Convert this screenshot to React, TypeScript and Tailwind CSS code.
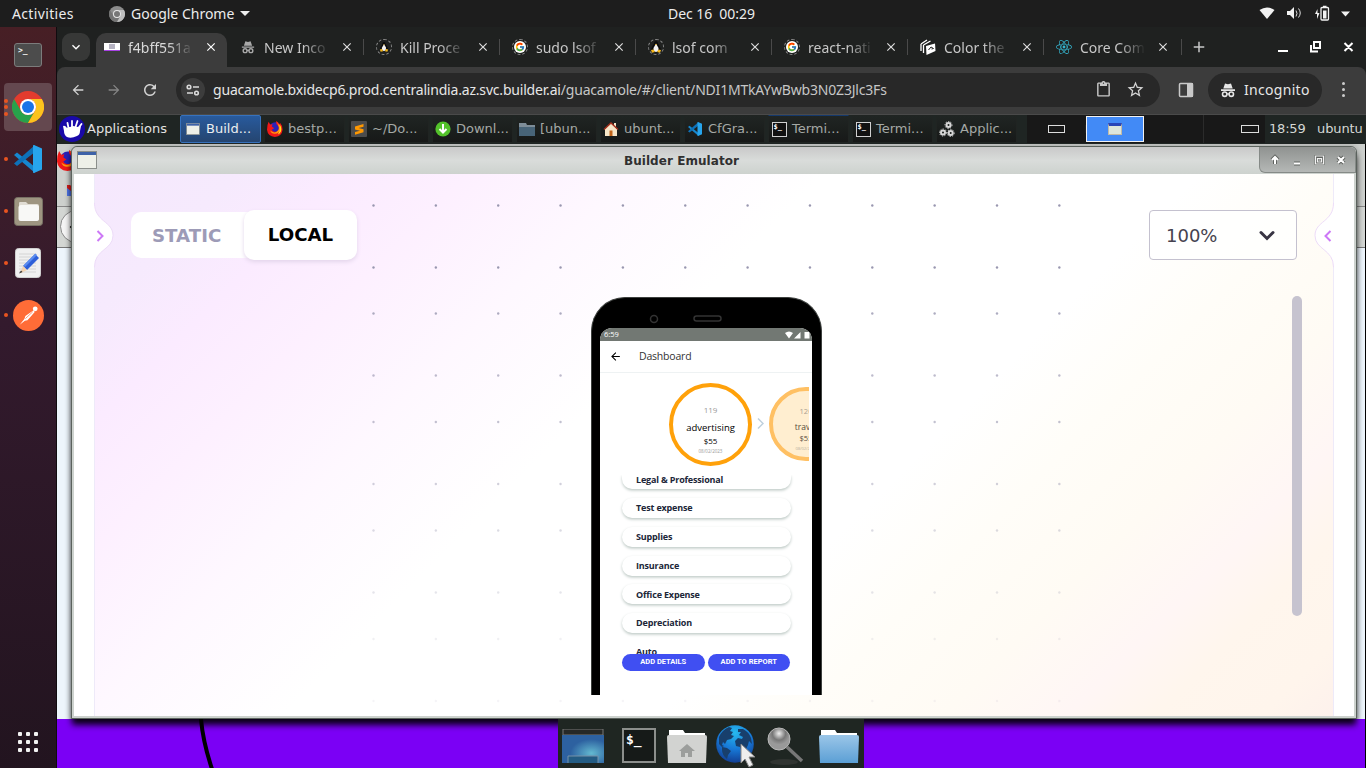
import type { ReactNode } from "react";
import { FcGoogle } from "react-icons/fc";
import { FaReact } from "react-icons/fa";
import { MdArrowBack, MdArrowForward, MdRefresh, MdClose, MdAdd, MdStarBorder, MdContentPaste, MdKeyboardArrowDown } from "react-icons/md";

const Chrome = ({ gray = false, className = "" }: { gray?: boolean; className?: string }) => {
  const c = gray ? ["#8c8c8c", "#747474", "#bdbdbd"] : ["#e33b2e", "#27a24b", "#fcc31e"];
  return (
    <svg viewBox="0 0 48 48" className={className}>
      <circle cx="24" cy="24" r="24" fill={c[0]} />
      <path d="M3.2 12A24 24 0 0 0 24 48L34.4 30A12 12 0 0 1 13.6 30Z" fill={c[1]} />
      <path d="M24 12H44.8A24 24 0 0 1 24 48L34.4 30A12 12 0 0 0 24 12Z" fill={c[2]} />
      <circle cx="24" cy="24" r="12" fill={gray ? "#e8e8e8" : "#fff"} />
      <circle cx="24" cy="24" r="9" fill={gray ? "#777" : "#1a73e8"} />
    </svg>
  );
};

const Incognito = ({ className = "" }: { className?: string }) => (
  <svg viewBox="0 0 16 16" className={className} fill="currentColor">
    <path d="M5 1.500 8 2.300l3-.8 1.700 5H3.300ZM1 7.300h14v1.600H1z" />
    <circle cx="4.700" cy="12.200" r="2.200" fill="none" stroke="currentColor" strokeWidth="1.600" />
    <circle cx="11.300" cy="12.200" r="2.200" fill="none" stroke="currentColor" strokeWidth="1.600" />
    <path d="M6.500 11.300h3v1.300h-3z" />
  </svg>
);

const Firefox = ({ className = "" }: { className?: string }) => (
  <svg viewBox="0 0 20 20" className={className}>
    <circle cx="10.500" cy="9.500" r="8" fill="#2a22b8" />
    <path d="M2 1 4 4.500 7 4 6 7l3 2-3 2q2 3.500 6 2 4-2 2.500-6L12 4q-1-2-.5-4 3 2 4 4l1-1.500q3.500 4 3 8.500-1 8.500-9.500 9Q1 19.500 0 11 0 5 2 1Z" fill="#f01818" />
    <path d="M12.500 1q1 3 4 5l.5 4q-1.500 6-7.500 6-4 0-5.500-4 4 3.500 8 1.500Q16 11 14.500 7Z" fill="#ff9a10" />
    <path d="M15.500 4q3.500 4 2 9-1.500 3-4 4 4-6 2-13Z" fill="#ffe21a" />
  </svg>
);

const Tux = ({ className = "" }: { className?: string }) => (
  <svg viewBox="0 0 12 12" className={className}>
    <path d="M6 0q2 0 2 2.500l2.500 4.500q1 3-2 4.500h-5Q.5 10 1.500 7L4 2.500Q4 0 6 0Z" fill="#0b0b0b" />
    <path d="M6 2.500 8.500 7q.5 3-2.500 4-3-1-2.500-4Z" fill="#f3f3f3" />
    <path d="M5 3h2L6 4.300ZM1 9l2.500-.5L5 11l-3 .7ZM11 9l-2.500-.5L7 11l3 .7Z" fill="#f4b71b" />
  </svg>
);

const VsCode = ({ className = "" }: { className?: string }) => (
  <svg viewBox="0 0 28 28" className={className}>
    <path d="M0 10 3 7.5 21 22v6L0 10Z" fill="#1687cf" />
    <path d="M0 18.5 3 21 21 7V0L0 18.5Z" fill="#0d71b8" />
    <path d="M20 0 28 3.5v21L20 28c-.8 0-1-.5-1-1V1c0-.6.3-1 1-1Z" fill="#27a5ed" />
  </svg>
);

const WindowIcon = ({ className = "" }: { className?: string }) => (
  <svg viewBox="0 0 20 18" className={className}>
    <rect x=".5" y=".5" width="19" height="17" fill="#eef0e8" stroke="#8b8f8b" />
    <rect x="1" y="1" width="18" height="3" fill="#3e62a8" />
  </svg>
);

const Globe = ({ className = "" }: { className?: string }) => (
  <svg viewBox="0 0 38 38" className={className}>
    <defs>
      <radialGradient id="globe" cx=".5" cy=".2" r=".8">
        <stop offset="0" stopColor="#27b9ee" />
        <stop offset=".55" stopColor="#1778d6" />
        <stop offset="1" stopColor="#123f94" />
      </radialGradient>
    </defs>
    <circle cx="19" cy="19" r="18.8" fill="url(#globe)" />
    <path d="M3 12Q6 5 13 2l3 1-2 3 3 1-2 3 3 1-3 3-4 1-2 4-2-2-1 3 2 1-2 1-3-3ZM6 22l5 1 4 3-3 4-1 4q-5-4-5-9ZM22 4l5 0q6 3 8 9l1 6-3-3-1 4-3 6-3 2-2-6-4-1-1-5 3-3 4 1 1-2-4-2 2-3-3 0Z" fill="#183f6c" />
  </svg>
);

function Ring({ children }: { children: ReactNode }) {
  return <span className="flex size-4 items-center justify-center rounded-full border border-dashed border-[#8a8a8a]">{children}</span>;
}

const tabs: { title: string; icon: ReactNode }[] = [
  { title: "New Inco", icon: <Incognito className="size-[14px] text-[#a9a9a9]" /> },
  { title: "Kill Proce", icon: <Ring><Tux className="size-2.5" /></Ring> },
  { title: "sudo lsof", icon: <Ring><span className="flex size-3 items-center justify-center rounded-full bg-white"><FcGoogle className="size-[10px]" /></span></Ring> },
  { title: "lsof com", icon: <Ring><Tux className="size-3" /></Ring> },
  { title: "react-nati", icon: <Ring><span className="flex size-3 items-center justify-center rounded-full bg-white"><FcGoogle className="size-[10px]" /></span></Ring> },
  {
    title: "Color the",
    icon: (
      <svg viewBox="0 0 16 16" className="size-4">
        <path d="M1 5v7M1 5l6-4M3.5 6v8M3.5 6l7-4" stroke="#fff" strokeWidth="1.3" fill="none" />
        <path d="M6 7 15 4.5 15.5 12 6.5 16Z" fill="#fff" />
        <path d="M8.5 11 11 8l2.5 1.5-2 .5" stroke="#222" fill="none" />
      </svg>
    ),
  },
  { title: "Core Com", icon: <FaReact className="size-4 text-[#35b5cf]" /> },
];

const termIcon = (
  <span className="flex size-[15px] border border-[#d0d0d0] bg-[#111] pl-[1px] font-['DejaVu_Sans_Mono',monospace] text-[7px] leading-[9px] font-bold text-white">$_</span>
);

const tasks: { title: string; icon: ReactNode }[] = [
  { title: "Build...", icon: <WindowIcon className="h-3 w-3.5" /> },
  { title: "bestp...", icon: <Firefox className="size-4" /> },
  {
    title: "~/Do...",
    icon: (
      <svg viewBox="0 0 16 16" className="size-4">
        <rect width="16" height="16" rx="1" fill="#4c4c4c" />
        <path d="M12.5 3 4 5.5v3l5 1.3-5 1.3v2.7l8.5-2.5v-3L7.500 7l5-1.300Z" fill="#ff9800" />
      </svg>
    ),
  },
  {
    title: "Downl...",
    icon: (
      <svg viewBox="0 0 16 16" className="size-4">
        <circle cx="8" cy="8" r="7.600" fill="#53c22b" />
        <path d="M8 3v8M4.500 8 8 11.500 11.500 8" stroke="#fff" strokeWidth="2" fill="none" />
      </svg>
    ),
  },
  {
    title: "[ubun...",
    icon: (
      <svg viewBox="0 0 16 14" className="h-3.5 w-4">
        <path d="M0 1h7l1 2h8v11H0Z" fill="#7e8d98" />
        <path d="M0 5h16v9H0Z" fill="#486478" />
      </svg>
    ),
  },
  {
    title: "ubunt...",
    icon: (
      <svg viewBox="0 0 16 16" className="size-4">
        <path d="M11 2h2v4h-2zM2 8l6-6 6 6v7H2Z" fill="#f7e6c8" />
        <path d="M1 8.500 8 2l7 6.500" stroke="#a5301c" strokeWidth="1.400" fill="none" />
        <path d="M6.500 9.500h3V15h-3z" fill="#c2651b" />
      </svg>
    ),
  },
  { title: "CfGra...", icon: <VsCode className="size-3.5" /> },
  { title: "Termi...", icon: termIcon },
  { title: "Termi...", icon: termIcon },
  {
    title: "Applic...",
    icon: (
      <svg viewBox="0 0 16 16" className="size-4" fill="none" stroke="#d8d8d8">
        <g strokeWidth="2"><circle cx="9.500" cy="4" r="2" /><circle cx="4" cy="11.500" r="2" /><circle cx="11.700" cy="12" r="2" /></g>
        <g strokeWidth="1" strokeDasharray="1.300 1.300"><circle cx="9.500" cy="4" r="3.500" /><circle cx="4" cy="11.500" r="3.500" /><circle cx="11.700" cy="12" r="3.500" /></g>
      </svg>
    ),
  },
];

const GnomeBar = () => (
  <header className="flex h-[27px] shrink-0 items-center bg-[#1d1d1d] text-[14px] text-[#ececec]">
    <span className="ml-3 w-[97px] tracking-[0.35px]">Activities</span>
    <Chrome gray className="size-4" />
    <span className="ml-1.5 w-[109px] whitespace-nowrap">Google Chrome</span>
    <svg viewBox="0 0 10 5" className="h-[5px] w-[10px]"><path d="M0 0h10L5 5Z" fill="#eee" /></svg>
    <span className="ml-[418px] w-[88px] whitespace-pre tracking-[-0.05px]">Dec 16  00:29</span>
    <svg viewBox="0 0 100 20" className="ml-[503px] h-5 w-[100px]" fill="#f2f2f2">
      <path d="M.5 6q7.500-5 15 0L8 15Z" />
      <path d="M28 7h3l4-4v12l-4-4h-3z" />
      <path d="M37 6.500q2 3 0 6M39.500 4.500q3.500 4.500 0 9" stroke="#ddd" fill="none" />
      <path d="M58.500 5 56 10h2v5l2.500-6h-2z" />
      <rect x="62" y="3.500" width="7.500" height="12.500" rx="1" fill="none" stroke="#f2f2f2" strokeWidth="1.300" />
      <path d="M64 6.500h3.500v8H64zM64 1.800h3.500V3.500H64zM82 7.500h9l-4.500 5Z" />
    </svg>
  </header>
);

const dots = (n: number) => (
  <div className="flex w-4 -translate-x-px flex-col items-center gap-[2.500px]">
    {Array.from({ length: n }, (_, i) => <span key={i} className="size-1 rounded-full bg-[#e95420]" />)}
  </div>
);

const DockItem = ({ n, active, children }: { n: number; active?: boolean; children: ReactNode }) => (
  <div className="relative flex h-[52px] w-[56px] items-center justify-center">
    <div className={active ? "flex size-12 items-center justify-center rounded bg-[#64484f]" : "flex size-12 items-center justify-center"}>{children}</div>
    <div className="absolute top-0 -left-[1px] flex h-full items-center">{dots(n)}</div>
  </div>
);

const Dock = () => (
  <aside className="flex w-[57px] shrink-0 flex-col border-r border-[#100b0f] bg-linear-to-b from-[#471f25] via-[#331a2d] via-40% to-[#22141f] pt-[2px]">
    <DockItem n={0}>
      <div className="h-6 w-7 rounded-[3px] border border-[#7c7c7c] bg-[#4c4c4c] pl-[3px] font-['DejaVu_Sans_Mono',monospace] text-[8px] leading-[13px] font-bold text-[#eee]">&gt;_</div>
    </DockItem>
    <DockItem n={3} active><Chrome className="size-8" /></DockItem>
    <DockItem n={1}><VsCode className="size-7" /></DockItem>
    <DockItem n={1}>
      <svg viewBox="0 0 29 29" className="size-[29px]">
        <rect x=".500" y=".500" width="28" height="28" rx="3" fill="#9e9581" stroke="#777064" />
        <path d="M5 6q0-1 1-1h6l2 2h9q2 0 2 2v12q0 3-3 3H8q-3 0-3-3Z" fill="#e1ddd4" />
        <rect x="4.500" y="8" width="20.500" height="16" rx="2.500" fill="#f8f8f6" />
      </svg>
    </DockItem>
    <DockItem n={1}>
      <svg viewBox="0 0 26 30" className="h-[30px] w-[26px]">
        <rect x=".500" y=".500" width="25" height="29" rx="3" fill="#f0f0f0" stroke="#d0d0d0" />
        <path d="M4 6h17M4 9h17M4 12h17M4 15h17M4 18h17M4 21h17M4 24h17" stroke="#d4d4d4" />
        <path d="M8 18 20 6l4 4-12 12Z" fill="#2e5fd8" />
        <path d="m8.500 17.500 12-12 1.500 1.500-12 12Z" fill="#5b8cf0" />
        <path d="M8 18l4 4-7 3.500Z" fill="#f2d2b0" /><path d="m6 22.500 1.500 1.500L4 25.500Z" fill="#333" />
      </svg>
    </DockItem>
    <DockItem n={1}>
      <svg viewBox="0 0 30 30" className="size-[31px]">
        <circle cx="15" cy="15" r="15" fill="#ff6c37" />
        <circle cx="21.500" cy="8.500" r="2.300" fill="#fff" />
        <path d="M20 10 12 15.500l-1 3-4.500 5.500 5-4 2.500-.500 7-8Z" fill="#fff" />
        <path d="m12 18 7-6.500" stroke="#ff6c37" strokeWidth=".7" />
      </svg>
    </DockItem>
    <div className="mt-auto mb-4 ml-[18px] grid w-5 grid-cols-3 gap-1">
      {Array.from({ length: 9 }, (_, i) => <span key={i} className="size-1 rounded-[1px] bg-[#f2f2f2]" />)}
    </div>
  </aside>
);

const fade = "w-[72px] shrink-0 whitespace-nowrap [mask-image:linear-gradient(to_right,black_55%,transparent_91%)]";

const TabStrip = () => (
  <div className="flex h-10 shrink-0 items-center bg-[#1f2120] text-[14px] text-[#c7c7c7]">
    <div className="ml-[5px] flex size-7 items-center justify-center rounded-[9px] bg-[#373837]"><MdKeyboardArrowDown className="size-4 text-white" /></div>
    <div className="ml-[6px] flex h-[34px] w-[131px] items-center self-end rounded-t-[10px] bg-[#3c3c3c] pb-[6px] pl-2 text-[#d9d9d9]">
      <span className="flex h-2 w-4 items-center justify-center border-b border-[#a742e4] bg-white"><span className="h-[5px] w-1.5 bg-[#b6b3c2]" /></span>
      <span className={`ml-2 ${fade}`}>f4bff551a</span>
      <MdClose className="ml-[4px] size-[14px] shrink-0 text-white" />
    </div>
    {tabs.map((t, i) => (
      <div key={t.title} className="flex h-full w-[136px] shrink-0 items-center">
        <span className={i ? "h-4 w-px bg-[#4a4a4a]" : "w-px"} />
        <span className="ml-[12px] flex w-4 justify-center">{t.icon}</span>
        <span className={`ml-2 ${fade}`}>{t.title}</span>
        <MdClose className="ml-[4px] size-[14px] shrink-0 text-[#dedede]" />
      </div>
    ))}
    <span className="ml-[2px] h-4 w-px bg-[#4a4a4a]" />
    <MdAdd className="ml-2 size-[18px]" />
    <svg viewBox="0 0 76 14" className="ml-[70px] h-3.5 w-[76px]" fill="none" stroke="#fff" strokeWidth="2">
      <path d="M0 11h10M36 2h6v6h-6zM33 5v6.500h7M66.500 3l8 8M74.500 3l-8 8" />
    </svg>
  </div>
);

const Toolbar = () => (
  <div className="flex h-[47px] shrink-0 items-center rounded-t-lg bg-[#3c3c3c] pb-[2px] text-[14px] text-[#e6e6e6]">
    <MdArrowBack className="ml-[13px] size-4 text-[#d2d2d2]" />
    <MdArrowForward className="ml-5 size-4 text-[#858585]" />
    <MdRefresh className="ml-[19px] size-[18px] text-[#d2d2d2]" />
    <div className="ml-[17px] flex h-[34px] w-[984px] items-center rounded-full bg-[#282828] pl-[5px]">
      <span className="flex size-6 items-center justify-center rounded-full bg-[#3c3c3c]">
        <svg viewBox="0 0 14 12" className="h-3 w-3.5" fill="none" stroke="#dadada" strokeWidth="1.600"><circle cx="3" cy="3" r="1.800" /><circle cx="10.500" cy="9" r="1.800" /><path d="M7 3h6M1 9h6" /></svg>
      </span>
      <span className="ml-2 w-[860px] whitespace-nowrap tracking-[-0.19px]">guacamole.bxidecp6.prod.centralindia.az.svc.builder.ai<span className="text-[#c6c6c6]">/guacamole/#/client/NDI1MTkAYwBwb3N0Z3Jlc3Fs</span></span>
      <MdContentPaste className="ml-[22px] size-[17px] text-[#c9c9c9]" />
      <MdStarBorder className="ml-[14px] size-[19px] text-[#d4d4d4]" />
    </div>
    <svg viewBox="0 0 16 16" className="ml-[18px] size-4"><rect x="1.500" y="1.500" width="13" height="13" rx="1" fill="none" stroke="#c9c9c9" strokeWidth="1.500" /><path d="M9 1h6v14H9z" fill="#c9c9c9" /></svg>
    <div className="ml-[14px] flex h-[34px] w-[114px] items-center rounded-full bg-[#282828] pl-3">
      <Incognito className="size-4" /><span className="ml-2 tracking-[0.3px]">Incognito</span>
    </div>
    <div className="ml-5 flex flex-col gap-[3px]">{[0, 1, 2].map((i) => <span key={i} className="size-[3px] rounded-full bg-[#ccc]" />)}</div>
  </div>
);

const taskStyle = (i: number) => {
  if (i === 0) return "flex h-[28px] w-[81px] items-center rounded-[2px] border border-[#3772bd] bg-linear-to-b from-[#285a9d] to-[#254570] pl-1 text-[#eceef0]";
  if (i === 7) return "flex h-[28px] w-[81px] items-center border border-[#202422] border-t-[#15396c] bg-linear-to-b from-[#202523] to-[#171918] pl-0.5 text-[#a5a9a6]";
  return "flex h-[28px] w-[81px] items-center border border-[#202422] bg-linear-to-b from-[#202523] to-[#171918] pl-0.5 text-[#a5a9a6]";
};

const RemotePanel = () => (
  <div className="flex h-8 shrink-0 items-center border-t border-b border-t-[#4a4a4a] border-b-[#555055] bg-[#1f2523] pb-[2px] font-['DejaVu_Sans',sans-serif] text-[13px] text-[#d5d8d5]">
    <svg viewBox="0 0 26 26" className="ml-[2px] size-[26px]">
      <circle cx="13" cy="13" r="13" fill="#1909a8" />
      <path d="M4 10q2-1 4 2l2-1 1 0 3-1 5 1 3-1-1 5q0 4-3 5-6 3-10 1-3-2-3-6Z" fill="#fff" />
      <path d="m9.500 12-1-5M13 11l0-6M16.500 11l2-6M19.500 12l3-4" stroke="#fff" strokeWidth="1.800" strokeLinecap="round" />
    </svg>
    <span className="ml-0.5 w-[93px] tracking-[0.05px] text-[#e2e2e2]">Applications</span>
    <div className="flex gap-[3px]">
      {tasks.map((t, i) => (
        <div key={i} className={taskStyle(i)}>
          <span className="flex w-4 justify-center">{t.icon}</span>
          <span className="ml-[5px] whitespace-nowrap">{t.title}</span>
        </div>
      ))}
    </div>
    <div className="ml-[10px] flex h-[28px] items-center bg-[#181818]">
      <div className="flex w-[59px] items-center justify-center border-r border-[#222]"><span className="h-2 w-[17px] border border-[#ddd]" /></div>
      <div className="flex h-[26px] w-[58px] items-center justify-center border border-[#f2f2f2] bg-[#428af6]"><span className="h-3 w-3.5 border border-t-[3px] border-[#c2baa5] border-t-[#2846b8] bg-[#dde6dc]" /></div>
      <div className="h-full w-[60px] border-r border-[#2b2b2b]" />
      <div className="flex w-[61px] justify-end pr-[6px]"><span className="h-2 w-[18px] border border-[#ddd]" /></div>
    </div>
    <span className="ml-1 w-[48px] tracking-[-0.2px]">18:59</span>
    <span className="tracking-[-0.1px]">ubuntu</span>
  </div>
);

const rows = [205.5, 267.5, 313.5, 375.5, 422, 484, 530.5, 592.5, 639, 701];
const opac = [1, 1, 0.8, 0.65, 0.6, 0.45, 0.35, 0.25, 0.15, 0.1];
const categories = ["Test expense", "Supplies", "Insurance", "Office Expense", "Depreciation"];

const Phone = () => (
  <div className="h-[398px] w-[231px] overflow-hidden rounded-t-[34px] border-x border-t border-[#3d403e] bg-black font-['Open_Sans',sans-serif]">
    <svg viewBox="0 0 229 30" className="block h-[30px] w-[229px]" fill="none" stroke="#333" strokeWidth="1.500">
      <circle cx="62" cy="21" r="3.500" /><rect x="102" y="18" width="27" height="5" rx="2.500" />
    </svg>
    <div className="ml-2 h-[367px] w-[212px] overflow-hidden rounded-t-[12px] bg-white">
      <div className="flex h-[13px] items-center bg-[#727873] pl-1 text-white">
        <span className="w-[181px] text-[7.500px]">6:59</span>
        <svg viewBox="0 0 26 8" className="h-2 w-[26px]" fill="#fff"><path d="M0 2q4-3 8 0L4 7.500ZM9 7.500 15.500 1v6.500ZM19.500 1h5v6.500h-5z" /></svg>
      </div>
      <div className="flex h-[32px] items-center border-b border-[#eef2f3] pb-px pl-[9px]">
        <MdArrowBack className="size-[13px] text-black" />
        <span className="ml-[17px] pt-0.5 text-[10.500px] tracking-[-0.2px] text-[#333]">Dashboard</span>
      </div>
      <div className="flex h-[102px] w-[209px] items-center overflow-hidden pl-[69px]">
        <div className="flex size-[83px] shrink-0 flex-col items-center rounded-full border-[4.500px] border-[#ffa10a] pt-[17px] text-black">
          <span className="text-[8px] leading-[11px] font-medium text-[#999]">119</span>
          <span className="mt-[6px] text-[9.500px] leading-[14px] font-medium">advertising</span>
          <span className="text-[8px] leading-[12px] font-medium">$55</span>
          <span className="text-[4.500px] leading-[8px] text-[#999]">08/02/2023</span>
        </div>
        <svg viewBox="0 0 7 11" className="mx-[5px] mb-0.5 h-[11px] w-[7px] shrink-0"><path d="m1 .500 5 5-5 5" stroke="#bfd0dd" strokeWidth="1.500" fill="none" /></svg>
        <div className="flex size-[74px] shrink-0 flex-col items-center rounded-full border-4 border-[#ffc063] bg-[#ffeed0] pt-[15px] text-[#574d3e]">
          <span className="text-[7.500px] leading-[11px] text-[#aaa093]">120</span>
          <span className="mt-[3px] text-[8.500px] leading-[13px] font-medium">travel</span>
          <span className="text-[7.500px] leading-[11px]">$55</span>
          <span className="mt-px text-[4px] leading-[8px] text-[#b8ae9e]">08/02/2023</span>
        </div>
      </div>
      <div className="flex h-[178.500px] flex-col gap-[8.800px] overflow-hidden px-[22px] text-[9px] font-bold text-[#202638]">
        <div className="flex h-[14.200px] w-[169px] shrink-0 items-center rounded-b-[10px] bg-white pb-[5px] pl-3.5 tracking-[-0.17px] shadow-[0_1.5px_3px_#bfcac6]">Legal &amp; Professional</div>
        {categories.map((c) => (
          <div key={c} className="flex h-5 w-[169px] shrink-0 items-center rounded-[10px] bg-white pl-3.5 tracking-[-0.17px] shadow-[0_1.5px_3px_#bfcac6]">{c}</div>
        ))}
        <div className="flex h-5 w-[169px] shrink-0 items-center pl-3.5 tracking-[-0.17px]">Auto</div>
      </div>
      <div className="flex h-[17px] gap-[3px] px-[22px] font-[Roboto,sans-serif] text-[7.500px] font-bold text-white">
        <span className="flex w-[83px] items-center justify-center rounded-full bg-[#404ff2]">ADD DETAILS</span>
        <span className="flex w-[83px] items-center justify-center rounded-full bg-[#404ff2]">ADD TO REPORT</span>
      </div>
    </div>
  </div>
);

const SideNotch = ({ flip }: { flip?: boolean }) => (
  <svg viewBox="0 0 20 66" className={flip ? "absolute top-[28px] -right-px h-[66px] w-5 -scale-x-100" : "absolute top-[28px] -left-px h-[66px] w-5"}>
    <path d="M-1 1H.500C.500 20 19 19 19 33.500S.500 47 .500 65H-1Z" fill="#fff" stroke="#eddcf8" />
    <path d="m3.500 29 5 5-5 5" stroke="#cc78f6" strokeWidth="2" fill="none" />
  </svg>
);

const Emulator = () => (
  <section className="absolute top-[2px] left-[14px] flex h-[573px] w-[1286px] flex-col rounded-t-md border border-[#5b625d] bg-[#cdd2ce] font-['DejaVu_Sans',sans-serif] shadow-[0_7px_6px_-1px_rgba(0,0,0,.9),0_0_6px_rgba(0,0,0,.25)]">
    <div className="flex h-[27px] shrink-0 rounded-t-md bg-linear-to-b from-[#c9c9c9] via-[#d9dcda] to-[#cdd2ce]">
      <WindowIcon className="mt-1 ml-[5px] h-[18px] w-5" />
      <span className="flex-1 pt-[5px] pl-[7px] text-center text-[12px] leading-[18px] font-bold tracking-[0.06px] text-[#303030]">Builder Emulator</span>
      <div className="flex h-[26px] w-[97px] items-center justify-around rounded-tr-md rounded-bl-md border border-t-0 border-[#858a87] bg-linear-to-b from-[#8f9290] to-[#b5b8b6] pt-px pl-[2px]">
        <svg viewBox="0 0 88 12" className="h-3 w-[88px]" fill="none" stroke="#5f625f" strokeWidth="4">
          <path d="M10 10V4M7 6l3-3 3 3M29 9.500h6M51.500 3h6v6h-6zM73 3l6 6M79 3l-6 6" />
          <path d="M10 10V4M7 6l3-3 3 3M29 9.500h6M73 3l6 6M79 3l-6 6" stroke="#fff" strokeWidth="2" />
          <path d="M50.500 2h8v8h-8zM52.500 4.500h4v3.500h-4z" stroke="#f2f2f2" strokeWidth="1.200" />
        </svg>
      </div>
    </div>
    <div className="mx-[2px] flex h-[542px] overflow-hidden bg-white px-5">
      <main className="relative h-full w-[1240px] border-x border-[#eeeaf9] bg-[linear-gradient(135deg,#f5e8fd_0%,#f6eafd_8%,#fbebff_14%,#fdf0ff_21%,#fef8ff_30%,#fff_41%,#fff_62%,#fffdf8_70%,#fffbf4_78%,#fff6f5_85%,#fff6ed_90%,#fff5ec_96%,#fdf1ec_100%)]">
        <svg viewBox="94 174 1240 542" className="absolute top-0 -left-px h-[542px] w-[1240px]">
          {rows.map((y, r) => Array.from({ length: 12 }, (_, i) => <circle key={`${r}-${i}`} cx={373.5 + i * 62.35} cy={y} r="1.200" fill="#9997b0" opacity={opac[r]} />))}
        </svg>
        <SideNotch />
        <SideNotch flip />
        <div className="relative flex h-[123px] items-start justify-between pr-9 pl-9">
          <div className="mt-[37px] flex text-[18.200px] font-bold">
            <div className="mt-px flex h-[46px] w-[125px] items-center rounded-l-[10px] bg-white pl-[21px] leading-[27px] text-[#9d9bb7]">STATIC</div>
            <div className="-ml-3 -mt-px flex h-[50px] w-[113px] items-center justify-center rounded-[10px] bg-white pb-px text-black shadow-[0_2px_4px_#e3d5eb]">LOCAL</div>
          </div>
          <div className="mt-9 flex h-[50px] w-[148px] items-center justify-between rounded-[4px] border border-[#c4c1cf] bg-white/70 pr-5 pl-4 text-[18px] text-[#45424f]">
            <span>100%</span>
            <svg viewBox="0 0 18 12" className="mt-0.5 h-3 w-[18px]"><path d="m3 2.500 6 6 6-6" stroke="#383443" strokeWidth="3" strokeLinecap="round" fill="none" /></svg>
          </div>
        </div>
        <div className="relative flex pl-[496px]">
          <Phone />
          <div className="mt-[-1px] ml-[470px] h-[320px] w-[10px] rounded-full bg-[#c6c3cf]" />
        </div>
      </main>
    </div>
  </section>
);

const Launcher = () => (
  <div className="absolute top-[575px] left-[501px] flex h-[49px] w-[306px] items-center bg-[#1f2622] pt-1">
    <svg viewBox="0 0 42 34" className="ml-1 h-[34px] w-[42px]">
      <defs><radialGradient id="screen" cx=".7" cy=".65"><stop stopColor="#63b9d0" /><stop offset="1" stopColor="#2d61a0" /></radialGradient></defs>
      <path d="M1 0h40v6H1z" fill="#262826" stroke="#777" /><path d="M0 6h42v28H0z" fill="url(#screen)" /><path d="M6 34v-7h30v7" fill="#245c83" stroke="#7792a9" />
    </svg>
    <div className="ml-[18px] h-[35px] w-[34px] border-2 border-[#8c8f8c] bg-[#161a18] pl-0.5 font-['DejaVu_Sans_Mono',monospace] text-[13px] leading-[20px] font-bold text-white">$_</div>
    <svg viewBox="0 0 42 34" className="ml-[10px] h-[34px] w-[42px]">
      <path d="M3 1h14l2 3h20v8H3z" fill="#fff" /><path d="M1 8q0-2 2-2h36q2 0 2 2l-1 26H2Z" fill="#d2d3d1" /><path d="m13 22 8-7 8 7h-3v6h-4v-4h-3v4h-4v-6Z" fill="#9c9e9c" />
    </svg>
    <div className="relative -mt-1 ml-2 size-[38px]">
      <Globe className="size-[38px]" />
      <svg viewBox="0 0 17 25" className="absolute top-[18px] left-[24px] h-[25px] w-[17px]"><path d="M1 1v19l4-4 4 8 4-2-4-8h6Z" fill="#eee" stroke="#888" /></svg>
    </div>
    <svg viewBox="0 0 40 40" className="ml-3 size-10">
      <defs><radialGradient id="lens" cx=".5" cy=".25"><stop stopColor="#eee" /><stop offset=".6" stopColor="#777" /><stop offset="1" stopColor="#999" /></radialGradient></defs>
      <ellipse cx="18" cy="36" rx="14" ry="3" fill="#303431" /><path d="m21 21 15 14" stroke="#777" strokeWidth="3.500" /><circle cx="13" cy="13" r="11" fill="url(#lens)" stroke="#b8b8b8" />
    </svg>
    <svg viewBox="0 0 42 34" className="ml-3 h-[34px] w-[42px]">
      <defs><linearGradient id="folder" x2="0" y2="1"><stop stopColor="#9bc6e8" /><stop offset="1" stopColor="#5b9fd5" /></linearGradient></defs>
      <path d="M3 1h14l2 3h20v8H3z" fill="#fff" /><path d="M1 8q0-2 2-2h36q2 0 2 2l-1 26H2Z" fill="url(#folder)" />
    </svg>
  </div>
);

export default function App() {
  return (
    <div className="flex h-[768px] w-[1366px] flex-col overflow-hidden bg-[#1d1d1d] font-['Noto_Sans',sans-serif]">
      <GnomeBar />
      <div className="flex min-h-0 flex-1">
        <Dock />
        <div className="flex min-w-0 flex-1 flex-col bg-[#1f2120]">
          <TabStrip />
          <Toolbar />
          <RemotePanel />
          <div className="relative -mt-[2px] min-h-0 flex-1 overflow-hidden border-r border-black bg-[#7b00f5]">
            <div className="flex h-[575px] flex-col bg-[#edf5fc]">
              <div className="h-[63px] border-b border-[#888] bg-[#cdd0cd]">
                <Firefox className="mt-[6px] size-[21px]" />
                <svg viewBox="0 0 16 11" className="mt-[14px] ml-[10px] h-[11px] w-4"><path d="M0 2h4v9H0z" fill="#4f75e9" /><path d="M0 0h3l5 4v5L0 3Z" fill="#d91c1c" /></svg>
              </div>
              <div className="h-[41px] border-b border-[#777] bg-[#d3d6d3] pt-[3px] pl-[3px]"><div className="flex size-[33px] items-center rounded-full border border-[#888] bg-[#f4f4f4] pl-1.5"><MdArrowBack className="size-4" /></div></div>
            </div>
            <svg viewBox="0 0 20 49" className="block ml-[140px] h-[49px] w-5"><path d="M4 0Q6 23 15 50" fill="none" stroke="#000" strokeWidth="4" /></svg>
            <Emulator />
            <Launcher />
          </div>
        </div>
      </div>
    </div>
  );
}
